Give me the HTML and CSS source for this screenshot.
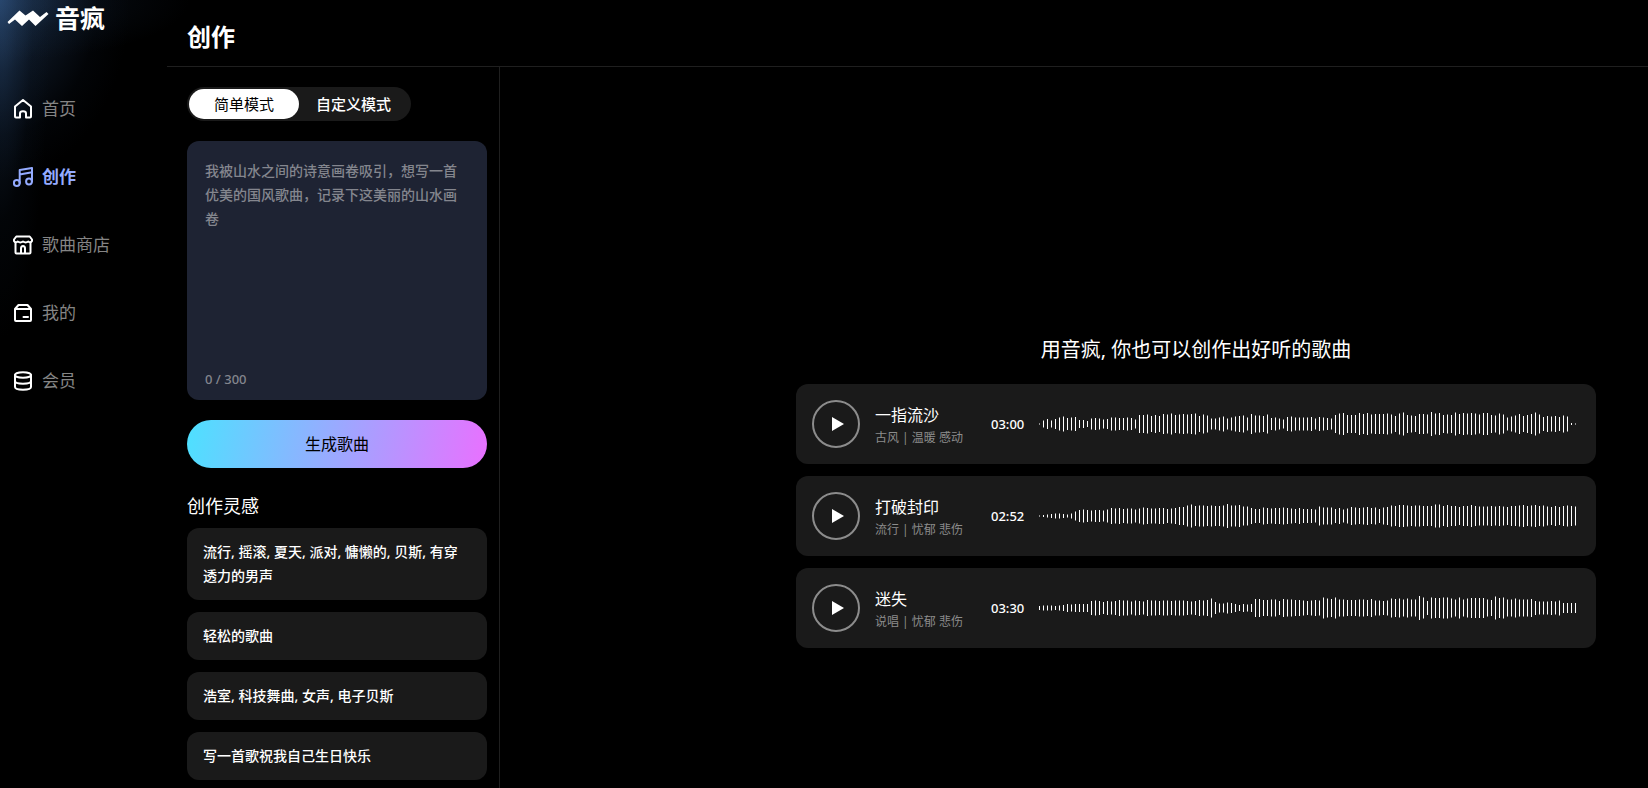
FILE: index.html
```html
<!DOCTYPE html>
<html lang="zh-CN">
<head>
    <meta charset="UTF-8">
    <title>音疯 - 创作</title>
    <link rel="stylesheet" href="styles.css">
</head>
<body>
    <div class="layout">
        <aside class="sidebar">
            <a class="logo" href="#">
                <svg class="logo-mark" width="42" height="18" viewBox="0 0 42 18">
                    <path d="M0.500 13 L12.500 1.500 L18.500 6.500 L26 1.500 L33 8 L39.500 3 L41.500 5 L28.500 17 L22 10.500 L15 17 L8 10.500 L2 15 Z" fill="#fff"/>
                </svg>
                <span>音疯</span>
            </a>
            <nav class="menu">
                <a class="menu-item" href="#">
                    <svg class="menu-icon" viewBox="0 0 20 20">
                        <path d="M2 7.600 L10 1 L18 7.600 V17.500 Q18 18.500 17 18.500 H13 V14.500 Q13 12.300 10 12.300 Q7 12.300 7 14.500 V18.500 H3 Q2 18.500 2 17.500 Z"/>
                    </svg>
                    <span>首页</span>
                </a>
                <a class="menu-item active" href="#">
                    <svg class="menu-icon" viewBox="0 0 20 20">
                        <circle cx="3.800" cy="16" r="2.900"/>
                        <circle cx="16" cy="14.500" r="2.900"/>
                        <path d="M6.700 16 V3 L19 1 V14.500 M6.700 7.500 L19 5.300"/>
                    </svg>
                    <span>创作</span>
                </a>
                <a class="menu-item" href="#">
                    <svg class="menu-icon" viewBox="0 0 20 20">
                        <path d="M3.300 1.500 H16.700 L19 4.500 V6 Q17.700 8.300 15.300 6.500 Q12.700 8.300 10 6.500 Q7.300 8.300 4.700 6.500 Q2.300 8.300 1 6 V4.500 Z"/>
                        <path d="M2.500 7.500 V17.500 Q2.500 18.500 3.500 18.500 H16.500 Q17.500 18.500 17.500 17.500 V7.500 M8 18.500 V13.500 Q8 11 10 11 Q12 11 12 13.500 V18.500"/>
                    </svg>
                    <span>歌曲商店</span>
                </a>
                <a class="menu-item" href="#">
                    <svg class="menu-icon" viewBox="0 0 20 20">
                        <path d="M2 6 L5.500 2 H14.500 L18 6 M2 6 H18 V17 Q18 18 17 18 H3 Q2 18 2 17 Z M10.500 14 H15"/>
                    </svg>
                    <span>我的</span>
                </a>
                <a class="menu-item" href="#">
                    <svg class="menu-icon" viewBox="0 0 20 20">
                        <ellipse cx="10" cy="4" rx="8" ry="2.800"/>
                        <path d="M2 4 V16 C2 19.600 18 19.600 18 16 V4 M2 10 C2 13.500 18 13.500 18 10"/>
                    </svg>
                    <span>会员</span>
                </a>
            </nav>
        </aside>

        <div class="page">
            <header class="page-header">
                <h1>创作</h1>
            </header>
            <div class="page-body">
                <section class="create-panel">
                    <div class="mode-switch">
                        <button type="button" class="mode active">简单模式</button>
                        <button type="button" class="mode">自定义模式</button>
                    </div>
                    <form class="create-form">
                        <div class="prompt-box">
                            <textarea class="prompt-input" id="prompt" maxlength="300" aria-label="歌曲描述" placeholder="我被山水之间的诗意画卷吸引，想写一首优美的国风歌曲，记录下这美丽的山水画卷"></textarea>
                            <div class="prompt-count"><span id="count">0</span> / 300</div>
                        </div>
                        <button type="button" class="generate">生成歌曲</button>
                    </form>
                    <h2 class="ideas-title">创作灵感</h2>
                    <div class="ideas">
                        <button type="button" class="idea">流行, 摇滚, 夏天, 派对, 慵懒的, 贝斯, 有穿透力的男声</button>
                        <button type="button" class="idea">轻松的歌曲</button>
                        <button type="button" class="idea">浩室, 科技舞曲, 女声, 电子贝斯</button>
                        <button type="button" class="idea">写一首歌祝我自己生日快乐</button>
                    </div>
                </section>

                <main class="songs">
                    <h2 class="songs-title">用音疯, 你也可以创作出好听的歌曲</h2>
                    <div class="song">
                        <button type="button" class="play" aria-label="播放"><svg width="12" height="14" viewBox="0 0 12 14"><path d="M0 0 L12 7 L0 14 Z" fill="#fff"/></svg></button>
                        <div class="song-info">
                            <div class="song-name">一指流沙</div>
                            <div class="song-tags">古风 | 温暖 感动</div>
                        </div>
                        <div class="song-time">03:00</div>
                        <svg class="wave" viewBox="0 0 537 24"></svg>
                    </div>
                    <div class="song">
                        <button type="button" class="play" aria-label="播放"><svg width="12" height="14" viewBox="0 0 12 14"><path d="M0 0 L12 7 L0 14 Z" fill="#fff"/></svg></button>
                        <div class="song-info">
                            <div class="song-name">打破封印</div>
                            <div class="song-tags">流行 | 忧郁 悲伤</div>
                        </div>
                        <div class="song-time">02:52</div>
                        <svg class="wave" viewBox="0 0 537 24"></svg>
                    </div>
                    <div class="song">
                        <button type="button" class="play" aria-label="播放"><svg width="12" height="14" viewBox="0 0 12 14"><path d="M0 0 L12 7 L0 14 Z" fill="#fff"/></svg></button>
                        <div class="song-info">
                            <div class="song-name">迷失</div>
                            <div class="song-tags">说唱 | 忧郁 悲伤</div>
                        </div>
                        <div class="song-time">03:30</div>
                        <svg class="wave" viewBox="0 0 537 24"></svg>
                    </div>
                </main>
            </div>
        </div>
    </div>
    <script src="script.js"></script>
</body>
</html>
```

FILE: styles.css
```css
* {
    box-sizing: border-box;
}
body {
    margin: 0;
    background-color: #000;
    color: #fff;
    font-family: "Noto Sans", "Noto Sans CJK SC", sans-serif;
    font-size: 14px;
    line-height: 24px;
}
button, textarea {
    font-family: inherit;
    border: none;
    padding: 0;
}
button {
    cursor: pointer;
}
h1, h2 {
    margin: 0;
}
a {
    color: inherit;
    text-decoration: none;
}
.layout {
    display: flex;
    min-height: 100vh;
    background:
        radial-gradient(ellipse 50px 340px at 0 0, rgba(44, 78, 122, 0.5), rgba(32, 58, 92, 0.3) 35%, rgba(14, 30, 50, 0.15) 65%, transparent),
        radial-gradient(ellipse 190px 60px at 0 0, rgba(44, 78, 122, 0.4), rgba(24, 44, 70, 0.2) 50%, transparent),
        radial-gradient(ellipse 130px 180px at 0 0, rgba(44, 76, 116, 0.7), rgba(28, 50, 80, 0.4) 40%, rgba(10, 20, 34, 0.2) 75%, transparent);
}

/* sidebar */
.sidebar {
    width: 167px;
    flex-shrink: 0;
}
.logo {
    display: flex;
    align-items: center;
    gap: 6px;
    height: 36px;
    padding-left: 7px;
    font-size: 25px;
    font-weight: bold;
}
.menu {
    display: flex;
    flex-direction: column;
    gap: 44px;
    padding: 61px 0 0 13px;
}
.menu-item {
    display: flex;
    align-items: center;
    gap: 9px;
    font-size: 17px;
    color: #858585;
}
.menu-icon {
    width: 20px;
    height: 20px;
    fill: none;
    stroke: #fff;
    stroke-width: 2;
    stroke-linejoin: round;
    stroke-linecap: round;
}
.menu-item.active {
    color: #94abff;
    font-weight: bold;
}
.menu-item.active .menu-icon {
    stroke: #94abff;
}

/* page */
.page {
    flex: 1;
    display: flex;
    flex-direction: column;
}
.page-header {
    height: 67px;
    padding: 20px 20px 0;
    border-bottom: 1px solid #1f1f1f;
}
.page-header h1 {
    font-size: 24px;
    line-height: 34px;
}
.page-body {
    flex: 1;
    display: flex;
}
.create-panel {
    width: 333px;
    flex-shrink: 0;
    padding: 20px 12px 8px 20px;
    border-right: 1px solid #1f1f1f;
}
.mode-switch {
    display: inline-flex;
    padding: 2px;
    border-radius: 17px;
    background: #1a1a1a;
    vertical-align: top;
}
.mode {
    height: 30px;
    padding: 0 18px 2px 17px;
    border-radius: 15px;
    background: none;
    color: #fff;
    font-size: 15px;
    font-weight: 500;
}
.mode.active {
    padding: 0 25px 2px;
    background: #fff;
    color: #000;
    font-weight: 400;
}
.prompt-box {
    margin-top: 20px;
    padding: 18px 18px 9px;
    border-radius: 12px;
    background: #1e2333;
}
.prompt-input {
    display: block;
    width: 100%;
    height: 208px;
    resize: none;
    outline: none;
    background: none;
    color: #fff;
    font-size: 14px;
    font-weight: 500;
    line-height: 24px;
}
.prompt-input::placeholder {
    color: #84868e;
}
.prompt-count {
    color: #84868e;
    font-size: 13px;
    font-weight: 500;
}
.generate {
    display: block;
    width: 100%;
    height: 48px;
    margin-top: 20px;
    padding-bottom: 2px;
    border-radius: 24px;
    background: linear-gradient(100deg, #4de1ff, #e970ff);
    color: #000;
    font-size: 16px;
}
.ideas-title {
    margin: 26px 0 10px;
    font-size: 18px;
    font-weight: 400;
}
.ideas {
    display: flex;
    flex-direction: column;
    gap: 12px;
}
.idea {
    padding: 12px 16px;
    border-radius: 12px;
    background: #1a1a1a;
    color: #fff;
    font-size: 14px;
    font-weight: 500;
    line-height: 24px;
    text-align: left;
}

/* song list */
.songs {
    flex: 1;
    display: flex;
    flex-direction: column;
    align-items: center;
    gap: 12px;
    padding: 271px 0 0 244px;
}
.songs-title {
    margin-bottom: 10px;
    font-size: 20px;
    font-weight: 400;
}
.song {
    display: flex;
    align-items: center;
    width: 100%;
    max-width: 800px;
    height: 80px;
    padding: 0 20px 0 16px;
    border-radius: 12px;
    background: #1a1a1a;
}
.play {
    display: flex;
    align-items: center;
    justify-content: center;
    width: 48px;
    height: 48px;
    padding-left: 4px;
    border: 2px solid #8c8c8c;
    border-radius: 50%;
    background: none;
}
.song-info {
    flex: 1;
    padding: 4px 0 0 15px;
}
.song-name {
    font-size: 16px;
}
.song-tags {
    color: #8c8c8c;
    font-size: 12px;
    line-height: 22px;
}
.song-time {
    width: 48px;
    font-size: 13px;
    font-weight: 500;
}
.wave {
    width: 537px;
    height: 24px;
    fill: #fff;
}
```

FILE: script.js
```javascript
// bar heights of each demo song
const waves = [
    [1,7,10,7,10,13,15,12,13,14,8,8,6,11,12,11,9,10,13,13,12,12,13,12,9,18,18,19,16,18,16,20,19,21,18,19,20,19,20,21,16,19,17,11,11,13,15,11,13,15,16,17,13,20,17,17,16,19,12,13,11,9,14,15,13,13,13,13,14,11,14,13,12,11,18,21,22,18,18,18,22,20,22,19,20,20,20,21,19,16,21,23,18,17,16,20,20,19,24,21,22,18,19,18,23,20,22,21,22,21,19,22,22,18,17,21,19,13,15,17,20,16,18,20,23,19,14,16,15,16,14,17,15,2,1],
    [1,2,3,4,5,5,4,3,5,9,12,13,12,11,12,12,11,13,16,15,16,14,15,15,13,15,17,16,15,15,16,16,14,15,16,18,18,21,23,20,21,21,20,21,20,20,21,24,21,21,22,19,19,16,14,14,17,16,15,16,16,17,16,15,14,16,14,14,14,13,19,17,17,17,14,16,13,15,18,17,16,17,18,16,17,14,17,18,21,20,22,22,21,20,21,21,20,20,20,23,23,20,22,20,20,18,20,20,22,20,19,19,19,20,19,20,19,18,20,20,21,22,20,21,22,20,21,19,18,20,18,20,21,20,19],
    [4,5,5,5,4,5,6,8,7,8,8,8,8,14,15,14,12,14,13,14,16,15,15,13,15,14,13,16,15,15,14,15,15,14,15,15,15,14,13,14,16,15,16,19,12,9,9,11,10,8,6,8,7,8,18,18,16,16,17,17,14,18,17,17,16,16,15,14,15,16,15,21,19,18,21,17,17,16,16,16,17,17,16,18,15,15,14,15,19,18,19,17,19,17,17,24,21,14,21,20,20,21,21,19,17,21,17,19,20,20,20,20,17,16,23,20,21,17,17,19,17,17,17,18,14,13,13,13,14,13,15,10,10,10,10]
];

document.querySelectorAll(".wave").forEach((svg, n) => {
    svg.innerHTML = waves[n].map((h, i) =>
        `<rect x="${i * 4}" y="${12 - h / 2}" width="1" height="${h}"/>`
    ).join("");
});

const prompt = document.getElementById("prompt");
prompt.addEventListener("input", () => {
    document.getElementById("count").textContent = prompt.value.length;
});
```
